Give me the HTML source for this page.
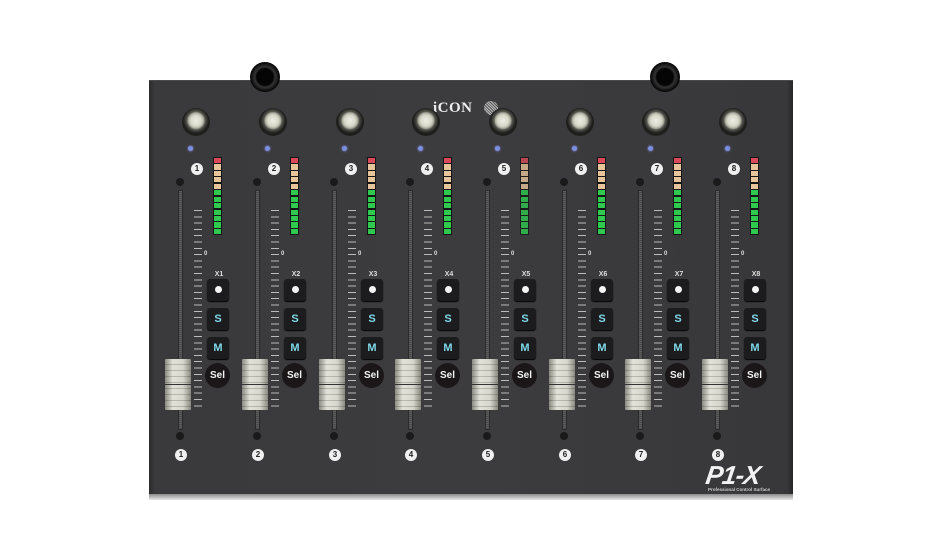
<!DOCTYPE html>
<html><head><meta charset="utf-8"><style>
*{margin:0;padding:0;box-sizing:border-box}
body{width:944px;height:555px;background:#fff;position:relative;overflow:hidden;font-family:"Liberation Sans",sans-serif}
.a{position:absolute}
#dev{left:149px;top:80px;width:644px;height:416px;background:linear-gradient(90deg,#2c2c2e 0,#3a3a3c 6px,#3c3c3e 50%,#38383a calc(100% - 6px),#262628 100%);border-top:1px solid #4a4a4a}
#lip{left:149px;top:494px;width:644px;height:6px;background:linear-gradient(#8a8a8a,#e8e8e8)}
.tk{width:30px;height:30px;border-radius:50%;background:radial-gradient(circle closest-side,#050505 55%,#333 68%,#1a1a1a 85%,#000 100%);top:62px}
.ch{top:0;width:77px;height:555px}
.kn{left:34px;top:108px;width:28px;height:28px;border-radius:50%;background:radial-gradient(circle closest-side at 50% 45%,#eeeee4 0,#d6d6c8 45%,#a8a89a 62%,#5a5a54 72%,#3c3c38 85%,#1e1e1c 100%)}
.led{left:40px;top:146px;width:5px;height:5px;border-radius:50%;background:#7b8fe0;box-shadow:0 0 2px #99f}
.n{width:12px;height:12px;border-radius:50%;background:#f0f0f0;color:#222;font-size:8px;font-weight:bold;text-align:center;line-height:12px}
.m{left:65px;top:157px;width:9px;height:78px;background:#151515;padding:1px;display:flex;flex-direction:column;gap:1.3px}
.m i{flex:1;background:#2ec94e;display:block}
.m i.r{background:#d84a5a}.m i.o{background:#e7c49a}
.tri{width:8px;height:8px;border-radius:50%;background:#1a1a1a}
.slot{left:30px;top:190px;width:5px;height:240px;background:repeating-linear-gradient(#5c5c5c 0 1px,#4a4a4a 1px 2px);border:1px solid #2a2a2a}
.tks{left:46px;top:210px;width:8px;height:200px;background:repeating-linear-gradient(#bbb 0 1px,transparent 1px 6.3px)}
.z{left:56px;top:251px;color:#ddd;font-size:6px;font-weight:bold}
.x{left:60px;top:271px;width:22px;text-align:center;color:#ddd;font-size:7px;font-weight:bold}
.b{left:59px;width:22px;height:22px;background:#1c1c1e;border-radius:3px;box-shadow:0 1px 1px #000;color:#7fd8e8;font-weight:bold;font-size:11px;text-align:center;line-height:22px}
.dot{width:7px;height:7px;background:#f4f4f4;border-radius:50%;margin:7px auto}
.sel{left:57px;top:363px;width:25px;height:25px;border-radius:50%;background:#1b1718;color:#f2f2f2;font-weight:bold;font-size:10px;text-align:center;line-height:25px}
.cap{left:17px;top:359px;width:26px;height:51px;background:linear-gradient(90deg,#8c8c84,#e2e2d8 30%,#d6d6cc 70%,#8a8a82);border-radius:1px}
.cap:after{content:"";position:absolute;left:0;right:0;top:25px;height:1px;background:#333}
.cap:before{content:"";position:absolute;left:0;right:0;top:0;bottom:0;background:repeating-linear-gradient(transparent 0 5px,rgba(0,0,0,.18) 5px 6px)}
</style></head><body>
<div class="a" id="dev"></div>
<div class="a" id="lip"></div>
<div class="a tk" style="left:250px"></div>
<div class="a tk" style="left:650px"></div>
<div class="a" style="left:433px;top:100px;color:#eee;font-family:'Liberation Serif',serif;font-weight:bold;font-size:15px;letter-spacing:0.5px">iCON</div>
<div class="a" style="left:484px;top:101px;width:14px;height:14px;border-radius:50%;background:repeating-linear-gradient(45deg,#bbb 0 1px,#555 1px 2px)"></div>

<div class="a ch" style="left:148px"><div class="a kn"></div><div class="a led"></div><div class="a n" style="left:43px;top:163px">1</div><div class="a m"><i class="r"></i><i class="o"></i><i class="o"></i><i class="o"></i><i class="o"></i><i></i><i></i><i></i><i></i><i></i><i></i><i></i></div><div class="a tri" style="left:28px;top:178px"></div><div class="a slot"></div><div class="a tks"></div><div class="a z">0</div><div class="a x">X1</div><div class="a b" style="top:279px"><div class="dot"></div></div><div class="a b" style="top:308px">S</div><div class="a b" style="top:337px">M</div><div class="a sel">Sel</div><div class="a cap"></div><div class="a tri" style="left:28px;top:432px"></div><div class="a n" style="left:27px;top:449px">1</div></div>
<div class="a ch" style="left:225px"><div class="a kn"></div><div class="a led"></div><div class="a n" style="left:43px;top:163px">2</div><div class="a m"><i class="r"></i><i class="o"></i><i class="o"></i><i class="o"></i><i class="o"></i><i></i><i></i><i></i><i></i><i></i><i></i><i></i></div><div class="a tri" style="left:28px;top:178px"></div><div class="a slot"></div><div class="a tks"></div><div class="a z">0</div><div class="a x">X2</div><div class="a b" style="top:279px"><div class="dot"></div></div><div class="a b" style="top:308px">S</div><div class="a b" style="top:337px">M</div><div class="a sel">Sel</div><div class="a cap"></div><div class="a tri" style="left:28px;top:432px"></div><div class="a n" style="left:27px;top:449px">2</div></div>
<div class="a ch" style="left:302px"><div class="a kn"></div><div class="a led"></div><div class="a n" style="left:43px;top:163px">3</div><div class="a m"><i class="r"></i><i class="o"></i><i class="o"></i><i class="o"></i><i class="o"></i><i></i><i></i><i></i><i></i><i></i><i></i><i></i></div><div class="a tri" style="left:28px;top:178px"></div><div class="a slot"></div><div class="a tks"></div><div class="a z">0</div><div class="a x">X3</div><div class="a b" style="top:279px"><div class="dot"></div></div><div class="a b" style="top:308px">S</div><div class="a b" style="top:337px">M</div><div class="a sel">Sel</div><div class="a cap"></div><div class="a tri" style="left:28px;top:432px"></div><div class="a n" style="left:27px;top:449px">3</div></div>
<div class="a ch" style="left:378px"><div class="a kn"></div><div class="a led"></div><div class="a n" style="left:43px;top:163px">4</div><div class="a m"><i class="r"></i><i class="o"></i><i class="o"></i><i class="o"></i><i class="o"></i><i></i><i></i><i></i><i></i><i></i><i></i><i></i></div><div class="a tri" style="left:28px;top:178px"></div><div class="a slot"></div><div class="a tks"></div><div class="a z">0</div><div class="a x">X4</div><div class="a b" style="top:279px"><div class="dot"></div></div><div class="a b" style="top:308px">S</div><div class="a b" style="top:337px">M</div><div class="a sel">Sel</div><div class="a cap"></div><div class="a tri" style="left:28px;top:432px"></div><div class="a n" style="left:27px;top:449px">4</div></div>
<div class="a ch" style="left:455px"><div class="a kn"></div><div class="a led"></div><div class="a n" style="left:43px;top:163px">5</div><div class="a m" style="opacity:.8"><i class="r"></i><i class="o"></i><i class="o"></i><i class="o"></i><i class="o"></i><i></i><i></i><i></i><i></i><i></i><i></i><i></i></div><div class="a tri" style="left:28px;top:178px"></div><div class="a slot"></div><div class="a tks"></div><div class="a z">0</div><div class="a x">X5</div><div class="a b" style="top:279px"><div class="dot"></div></div><div class="a b" style="top:308px">S</div><div class="a b" style="top:337px">M</div><div class="a sel">Sel</div><div class="a cap"></div><div class="a tri" style="left:28px;top:432px"></div><div class="a n" style="left:27px;top:449px">5</div></div>
<div class="a ch" style="left:532px"><div class="a kn"></div><div class="a led"></div><div class="a n" style="left:43px;top:163px">6</div><div class="a m"><i class="r"></i><i class="o"></i><i class="o"></i><i class="o"></i><i class="o"></i><i></i><i></i><i></i><i></i><i></i><i></i><i></i></div><div class="a tri" style="left:28px;top:178px"></div><div class="a slot"></div><div class="a tks"></div><div class="a z">0</div><div class="a x">X6</div><div class="a b" style="top:279px"><div class="dot"></div></div><div class="a b" style="top:308px">S</div><div class="a b" style="top:337px">M</div><div class="a sel">Sel</div><div class="a cap"></div><div class="a tri" style="left:28px;top:432px"></div><div class="a n" style="left:27px;top:449px">6</div></div>
<div class="a ch" style="left:608px"><div class="a kn"></div><div class="a led"></div><div class="a n" style="left:43px;top:163px">7</div><div class="a m"><i class="r"></i><i class="o"></i><i class="o"></i><i class="o"></i><i class="o"></i><i></i><i></i><i></i><i></i><i></i><i></i><i></i></div><div class="a tri" style="left:28px;top:178px"></div><div class="a slot"></div><div class="a tks"></div><div class="a z">0</div><div class="a x">X7</div><div class="a b" style="top:279px"><div class="dot"></div></div><div class="a b" style="top:308px">S</div><div class="a b" style="top:337px">M</div><div class="a sel">Sel</div><div class="a cap"></div><div class="a tri" style="left:28px;top:432px"></div><div class="a n" style="left:27px;top:449px">7</div></div>
<div class="a ch" style="left:685px"><div class="a kn"></div><div class="a led"></div><div class="a n" style="left:43px;top:163px">8</div><div class="a m"><i class="r"></i><i class="o"></i><i class="o"></i><i class="o"></i><i class="o"></i><i></i><i></i><i></i><i></i><i></i><i></i><i></i></div><div class="a tri" style="left:28px;top:178px"></div><div class="a slot"></div><div class="a tks"></div><div class="a z">0</div><div class="a x">X8</div><div class="a b" style="top:279px"><div class="dot"></div></div><div class="a b" style="top:308px">S</div><div class="a b" style="top:337px">M</div><div class="a sel">Sel</div><div class="a cap"></div><div class="a tri" style="left:28px;top:432px"></div><div class="a n" style="left:27px;top:449px">8</div></div>

<div class="a" style="left:706px;top:460px;color:#f2f2f2;font-weight:bold;font-style:italic;font-size:26px;letter-spacing:-1px;transform:skewX(-8deg)">P1-X</div>
<div class="a" style="left:708px;top:487px;color:#ccc;font-size:4.5px;font-weight:bold">Professional Control Surface</div>
</body></html>
